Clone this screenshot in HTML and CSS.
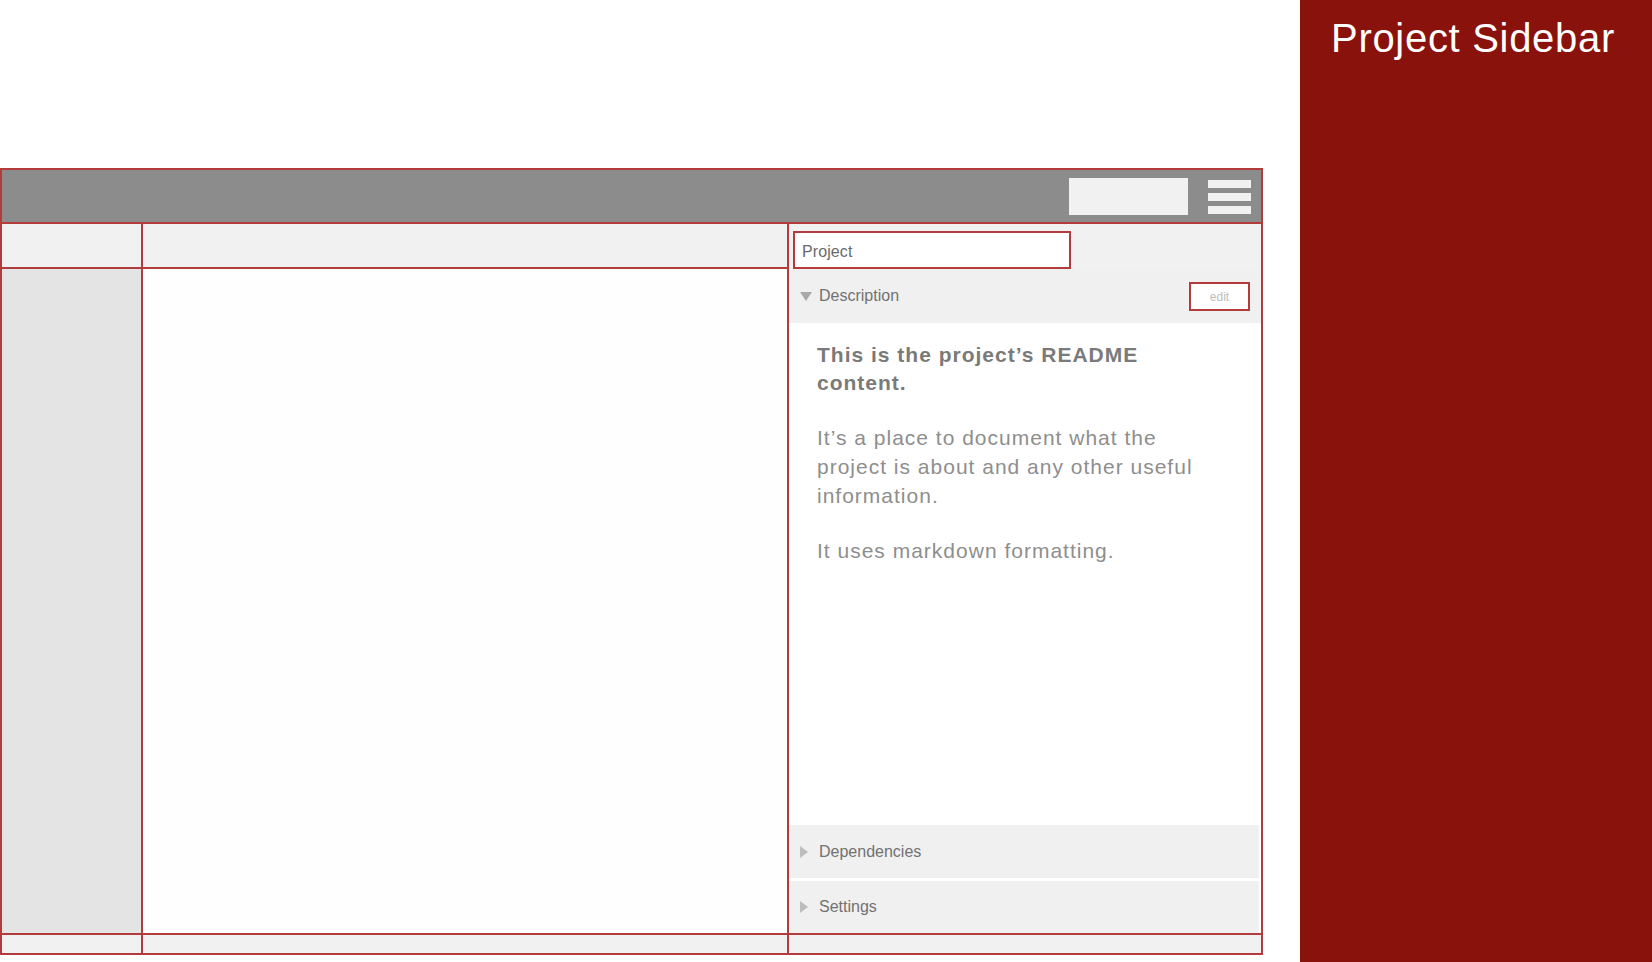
FILE: index.html
```html
<!DOCTYPE html>
<html lang="en">
<head>
<meta charset="utf-8">
<title>Project Sidebar</title>
<link rel="stylesheet" href="styles.css">
</head>
<body>
<div class="page">
  <main class="stage">
    <div class="frame">
      <header class="topbar">
        <div class="search"></div>
        <div class="burger"><span></span><span></span><span></span></div>
      </header>
      <div class="tool tool-left"></div>
      <div class="tool tool-mid"></div>
      <div class="tool tool-right">
        <div class="tab">Project</div>
      </div>
      <div class="col-left"></div>
      <div class="col-mid"></div>
      <section class="panel">
        <div class="sec-head open">
          <span class="tri tri-down"></span>
          <span class="sec-title">Description</span>
          <button class="edit">edit</button>
        </div>
        <div class="readme">
          <h2>This is the project’s README content.</h2>
          <p>It’s a place to document what the project is about and any other useful information.</p>
          <p>It uses markdown formatting.</p>
        </div>
        <div class="sec-head closed">
          <span class="tri tri-right"></span>
          <span class="sec-title">Dependencies</span>
        </div>
        <div class="sec-head closed">
          <span class="tri tri-right"></span>
          <span class="sec-title">Settings</span>
        </div>
      </section>
      <div class="foot"></div>
      <div class="foot"></div>
      <div class="foot"></div>
    </div>
  </main>
  <aside class="sidebar">
    <h1 class="title">Project Sidebar</h1>
  </aside>
</div>
</body>
</html>
```

FILE: styles.css
```css
* { box-sizing: border-box; }
html, body {
  margin: 0;
  padding: 0;
  background: #ffffff;
  font-family: "Liberation Sans", Arial, sans-serif;
}
.page {
  display: flex;
  width: 1652px;
  height: 962px;
  overflow: hidden;
}
.stage {
  width: 1300px;
  padding-top: 168px;
}
.frame {
  width: 1263px;
  height: 787px;
  display: grid;
  grid-template-columns: 139px 644px 472px;
  grid-template-rows: 52px 43px 664px 18px;
  gap: 2px;
  padding: 2px;
  background: #b23b3b;
}
.topbar {
  grid-column: 1 / -1;
  background: #8c8c8c;
  display: flex;
  align-items: center;
  justify-content: flex-end;
  padding-right: 10px;
  gap: 20px;
}
.search {
  width: 119px;
  height: 37px;
  background: #f1f1f1;
}
.burger {
  display: flex;
  flex-direction: column;
  gap: 5px;
  width: 43px;
  margin-top: 1px;
}
.burger span {
  display: block;
  height: 8px;
  background: #f1f1f1;
}
.tool { background: #f1f1f1; }
.tool-right {
  display: flex;
  align-items: flex-end;
  padding-left: 4px;
  margin-bottom: -2px;
}
.tab {
  width: 278px;
  height: 38px;
  background: #ffffff;
  border: 2px solid #b23b3b;
  display: flex;
  align-items: center;
  padding: 3px 0 0 7px;
  font-size: 16px;
  color: #6a6a6a;
  letter-spacing: 0.1px;
}
.col-left { background: #e4e4e4; }
.col-mid { background: #fefefe; }
.foot { background: #f1f1f1; }
.panel {
  background: #ffffff;
  display: flex;
  flex-direction: column;
  min-height: 0;
}
.sec-head {
  display: flex;
  align-items: center;
  background: #f0f0f0;
  padding-left: 11px;
  padding-right: 11px;
  font-size: 16px;
  color: #727272;
  letter-spacing: 0;
}
.sec-head.open { height: 54px; }
.sec-head.closed { height: 53px; margin-right: 2px; }
.sec-head.closed + .sec-head.closed { margin-top: 3px; height: 52px; }
.tri {
  display: inline-block;
  width: 0;
  height: 0;
  margin-right: 7px;
}
.tri-down {
  border-left: 6px solid transparent;
  border-right: 6px solid transparent;
  border-top: 9px solid #a8a8a8;
  margin-top: 1px;
}
.tri-right {
  border-top: 6px solid transparent;
  border-bottom: 6px solid transparent;
  border-left: 8px solid #bdbdbd;
  margin-right: 11px;
}
.sec-title { flex: 1; }
.edit {
  width: 61px;
  height: 29px;
  border: 2px solid #b23b3b;
  background: #ffffff;
  color: #bdbdbd;
  font-family: "Liberation Sans", Arial, sans-serif;
  font-size: 12px;
  padding: 0;
  margin-top: 1px;
}
.readme {
  flex: 1;
  padding: 18px 28px 0 28px;
}
.readme h2 {
  margin: 0;
  max-width: 400px;
  font-size: 21px;
  line-height: 28px;
  font-weight: bold;
  color: #7a7a7a;
  letter-spacing: 1px;
}
.readme p {
  margin: 26px 0 0 0;
  max-width: 400px;
  font-size: 21px;
  line-height: 29px;
  color: #8e8e8e;
  letter-spacing: 1px;
}
.sidebar {
  width: 352px;
  background: #8a120c;
  padding: 18px 0 0 31px;
}
.title {
  margin: 0;
  font-size: 40px;
  line-height: 40px;
  font-weight: normal;
  color: #ffffff;
  letter-spacing: 0.7px;
}
```
